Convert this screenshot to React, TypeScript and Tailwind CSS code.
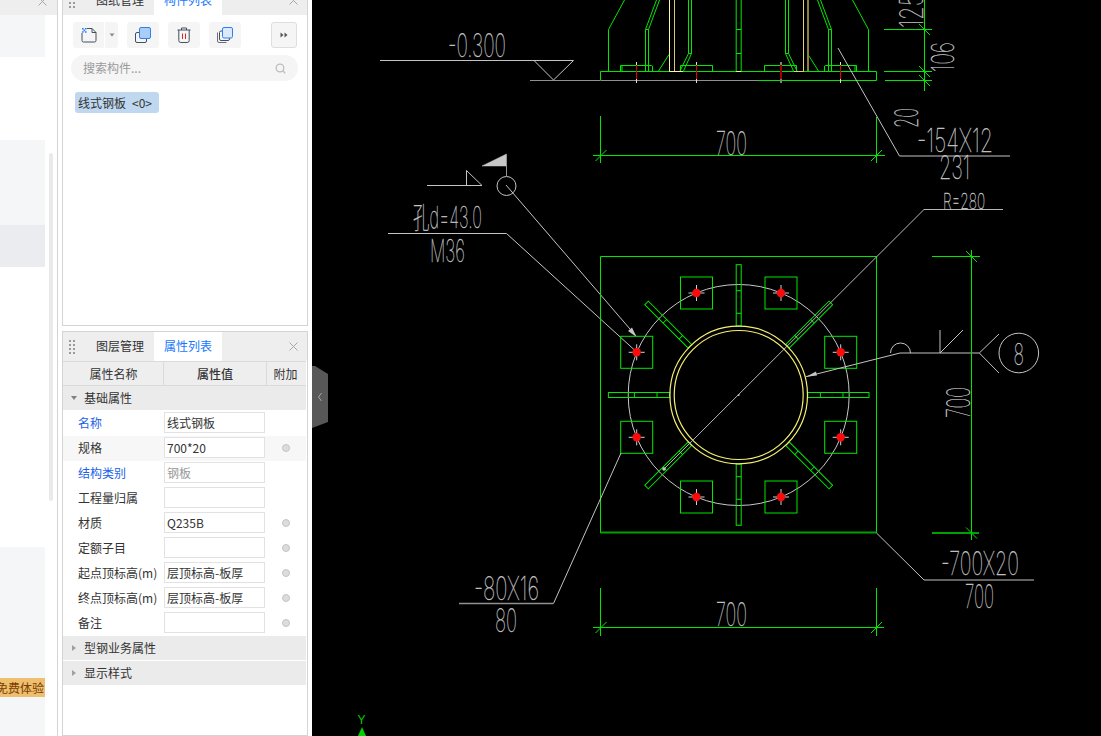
import React from "react";

const FONT = "font-['Noto_Sans_CJK_SC','Liberation_Sans',sans-serif]";
const GREEN = "#00e800";
const GRAY = "#c4c4c4";

function Close({ className = "" }: { className?: string }) {
  return (
    <svg width="9" height="9" viewBox="0 0 9 9" className={className}>
      <path d="M0.5 0.5L8.5 8.5M8.5 0.5L0.5 8.5" stroke="#a8a8a8" strokeWidth="1" fill="none" />
    </svg>
  );
}

function Dots() {
  const pts: [number, number][] = [];
  for (let r = 0; r < 4; r++) for (let c = 0; c < 2; c++) pts.push([c * 4, r * 4]);
  return (
    <svg width="6" height="14" viewBox="0 0 6 14">
      {pts.map(([x, y], i) => (
        <rect key={i} x={x} y={y} width="2" height="2" fill="#9a9a9a" />
      ))}
    </svg>
  );
}

function Header({ a, b }: { a: string; b: string }) {
  return (
    <div className="flex h-[29px] shrink-0 items-stretch bg-[#eeeeef] text-[12px]">
      <div className="flex w-[23px] items-center pl-[6px]">
        <Dots />
      </div>
      <div className="flex w-[68px] items-center justify-center pb-[2px] text-[#333]">{a}</div>
      <div className="flex w-[68px] items-center justify-center bg-white pb-[2px] text-[#1677ff]">{b}</div>
      <div className="ml-auto flex items-center pr-[9px]">
        <Close />
      </div>
    </div>
  );
}

function ToolBtn({ children, className = "" }: { children: React.ReactNode; className?: string }) {
  return <div className={`flex h-[26px] items-center justify-center rounded-[3px] bg-[#f5f5f5] ${className}`}>{children}</div>;
}

function Toolbar() {
  return (
    <div className="flex items-center pl-[10px] pt-[7px]">
      <div className="flex h-[26px] w-[45px] rounded-[3px] bg-[#f5f5f5]">
        <div className="flex w-[32px] items-center justify-center border-r border-white">
          <svg width="16" height="16" viewBox="0 0 16 16">
            <path d="M6 1.5H11L15 5.5V13.5Q15 15 13.5 15H2.5Q1 15 1 13.5V6" fill="none" stroke="#44505e" strokeWidth="1" />
            <path d="M11 1.5V5.5H15" fill="none" stroke="#44505e" strokeWidth="1" />
            <path d="M1 1h1.6v1.6H1zM4 1h1.6v1.6H4zM2.5 2.6h1.6v1.6H2.5zM1 4.2h1.6v1.6H1zM4 4.2h1.6v1.6H4z" fill="#2f7ff0" />
          </svg>
        </div>
        <div className="flex flex-1 items-center justify-center">
          <svg width="6" height="4" viewBox="0 0 6 4"><path d="M0.5 0.5H5.5L3 3.5Z" fill="#888" /></svg>
        </div>
      </div>
      <ToolBtn className="ml-[9px] w-[32px]">
        <svg width="16" height="16" viewBox="0 0 16 16">
          <rect x="0.5" y="5.5" width="11" height="10" rx="1.5" fill="none" stroke="#44505e" />
          <rect x="4.5" y="0.5" width="11" height="11" rx="1.5" fill="#a9cdf5" stroke="#2f7ff0" />
        </svg>
      </ToolBtn>
      <ToolBtn className="ml-[9px] w-[32px]">
        <svg width="14" height="16" viewBox="0 0 14 16">
          <path d="M0.5 3H13.5M4.5 3V1H9.5V3" fill="none" stroke="#44505e" />
          <path d="M1.8 3V13.5Q1.8 15.5 3.8 15.5H10.2Q12.2 15.5 12.2 13.5V3" fill="none" stroke="#44505e" />
          <path d="M5.5 6.5V12M8.5 6.5V12" stroke="#e0281e" strokeWidth="1" />
        </svg>
      </ToolBtn>
      <ToolBtn className="ml-[9px] w-[32px]">
        <svg width="16" height="16" viewBox="0 0 16 16">
          <path d="M0.5 5.5V14Q0.5 15.5 2 15.5H9.5" fill="none" stroke="#66707c" />
          <rect x="2.5" y="4" width="10" height="9.5" rx="1.5" fill="none" stroke="#44505e" />
          <rect x="5.5" y="0.5" width="10" height="10.5" rx="1.5" fill="#dce9fb" stroke="#2f7ff0" />
        </svg>
      </ToolBtn>
      <ToolBtn className="ml-[30px] w-[26px] border border-[#dedede]">
        <svg width="8" height="6" viewBox="0 0 8 6"><path d="M0.5 0.5L3.5 3L0.5 5.5ZM4.5 0.5L7.5 3L4.5 5.5Z" fill="#555" /></svg>
      </ToolBtn>
    </div>
  );
}

function Search() {
  return (
    <div className="ml-[8px] mt-[7px] flex h-[26px] w-[227px] items-center justify-between rounded-full bg-[#f5f5f5] pl-[12px] pr-[12px] text-[12px] text-[#9a9a9a]">
      <span>搜索构件...</span>
      <svg width="11" height="11" viewBox="0 0 11 11">
        <circle cx="5" cy="5" r="3.8" fill="none" stroke="#bdbdbd" strokeWidth="1.3" />
        <path d="M7.8 7.8L10.2 10.2" stroke="#bdbdbd" strokeWidth="1.3" />
      </svg>
    </div>
  );
}

const rows: { label: string; value: string; blue?: boolean; dim?: boolean; dot?: boolean; shade?: boolean }[] = [
  { label: "名称", value: "线式钢板", blue: true },
  { label: "规格", value: "700*20", dot: true, shade: true },
  { label: "结构类别", value: "钢板", blue: true, dim: true },
  { label: "工程量归属", value: "" },
  { label: "材质", value: "Q235B", dot: true },
  { label: "定额子目", value: "", dot: true },
  { label: "起点顶标高(m)", value: "层顶标高-板厚", dot: true },
  { label: "终点顶标高(m)", value: "层顶标高-板厚", dot: true },
  { label: "备注", value: "", dot: true },
];

function Section({ label, open }: { label: string; open?: boolean }) {
  return (
    <div className="flex h-[24px] items-center bg-[#ebebeb] text-[12px] text-[#333]">
      <div className="flex w-[21px] justify-center pl-[1px]">
        {open ? (
          <svg width="6" height="4" viewBox="0 0 6 4"><path d="M0 0H6L3 4Z" fill="#808080" /></svg>
        ) : (
          <svg width="4" height="6" viewBox="0 0 4 6"><path d="M0 0L4 3L0 6Z" fill="#a0a0a0" /></svg>
        )}
      </div>
      <span>{label}</span>
    </div>
  );
}

function Row({ r }: { r: (typeof rows)[number] }) {
  return (
    <div className={`flex h-[25px] items-center pb-[2px] text-[12px] ${r.shade ? "bg-[#f7f7f7]" : "bg-white"}`}>
      <div className={`w-[101px] shrink-0 whitespace-nowrap pl-[15px] ${r.blue ? "text-[#1a62e8]" : "text-[#333]"}`}>{r.label}</div>
      <div className={`flex h-[21px] w-[101px] shrink-0 items-center whitespace-nowrap border border-[#e2e2e2] bg-white pl-[2px] ${r.dim ? "text-[#999]" : "text-[#333]"}`}>
        {r.value}
      </div>
      <div className="flex flex-1 justify-center">
        {r.dot && <div className="h-[8px] w-[8px] rounded-full border border-[#c4c4c4] bg-[#dcdcdc]" />}
      </div>
    </div>
  );
}

function Sidebar() {
  return (
    <div className="relative flex w-[58px] shrink-0 flex-col border-r border-[#d4d4d4] text-[12px]">
      <div className="flex h-[15px] shrink-0 items-start justify-end bg-[#eeeeef] pr-[10px]">
        <div className="-mt-[3px]"><Close /></div>
      </div>
      <div className="h-[42px] w-[45px] shrink-0 bg-[#f5f6f8]" />
      <div className="h-[83px] shrink-0" />
      <div className="h-[85px] w-[45px] shrink-0 bg-[#f5f6f8]" />
      <div className="h-[42px] w-[45px] shrink-0 bg-[#ebecef]" />
      <div className="h-[280px] shrink-0" />
      <div className="flex h-[189px] w-[45px] shrink-0 flex-col bg-[#f5f6f8] pt-[131px]">
        <div className="flex h-[19px] items-center justify-end overflow-hidden whitespace-nowrap bg-[#edbf6e] pr-[1px] text-[#7a3d00]">免费体验</div>
      </div>
      <div className="absolute left-[49px] top-[153px] h-[348px] w-[4px] rounded-full bg-[#eaeaea]" />
    </div>
  );
}

function Panels() {
  return (
    <div className="flex h-[736px] w-[254px] shrink-0 flex-col overflow-hidden px-[4px]">
      <div className="-mt-[15px] h-[341px] shrink-0 border border-[#d4d4d4] bg-white">
        <Header a="图纸管理" b="构件列表" />
        <Toolbar />
        <Search />
        <div className="ml-[12px] mt-[11px] flex h-[21px] w-[84px] items-center whitespace-nowrap rounded-[3px] bg-[#bfd8f0] pl-[3px] text-[12px] text-[#333]">
          线式钢板<span className="ml-[6px]">&lt;0&gt;</span>
        </div>
      </div>
      <div className="mt-[5px] flex-1 border border-[#d4d4d4] bg-white">
        <Header a="图层管理" b="属性列表" />
        <div className="mr-[1px] flex flex-col">
          <div className="flex h-[25px] items-center border-y border-[#dadada] bg-[#eeeeef] text-[12px] text-[#333]">
            <div className="flex h-full w-[101px] items-center justify-center border-r border-[#dadada] pl-[1px]">属性名称</div>
            <div className="flex h-full w-[103px] items-center justify-center border-r border-[#dadada] font-medium">属性值</div>
            <div className="flex flex-1 items-center justify-center pr-[2px]">附加</div>
          </div>
          <Section label="基础属性" open />
          <div className="h-[1px]" />
          {rows.map((r) => (
            <Row key={r.label} r={r} />
          ))}
          <Section label="型钢业务属性" />
          <div className="h-[1px]" />
          <Section label="显示样式" />
        </div>
      </div>
    </div>
  );
}

function T({ x, y, w, s, rot, fill = GRAY, children }: { x: number; y: number; w: number; s: number; rot?: boolean; fill?: string; children: React.ReactNode }) {
  return (
    <text
      x={x}
      y={y}
      fontFamily="Inter,'Noto Sans CJK SC',sans-serif"
      fontWeight="100"
      fontSize={s}
      fill={fill}
      stroke={fill}
      strokeWidth="0.35"
      textLength={w}
      lengthAdjust="spacingAndGlyphs"
      transform={rot ? `rotate(-90 ${x} ${y})` : undefined}
    >
      {children}
    </text>
  );
}

function Rib({ angle }: { angle: number }) {
  return (
    <g transform={`rotate(${angle} 738.7 395)`} fill="none" stroke={GREEN}>
      <rect x="736.2" y="264.7" width="5" height="61.3" />
      <path d="M736.2 290.7H741.2M736.2 313.3H741.2" />
    </g>
  );
}

function Bolt({ x, y }: { x: number; y: number }) {
  return (
    <g>
      <rect x={x - 16} y={y - 16} width="32" height="32" fill="none" stroke={GREEN} />
      <path d={`M${x - 8} ${y}H${x + 8}M${x} ${y - 8}V${y + 8}`} stroke="#d0d0d0" />
      <circle cx={x} cy={y} r="4.2" fill="#ff0a0a" />
    </g>
  );
}

function Half() {
  return (
    <g fill="none" stroke={GREEN}>
      <path d="M608.5 71V29.5L624.5 0" />
      <path d="M645.5 71V29.5H648.5V71M645.5 29.5L656.5 0M648.5 29.5L659.5 0" />
      <path d="M620.5 71V65.5H651.5L652.5 66V71M622 65.5V71" />
      <path d="M658.5 71L669 54.5" />
      <path d="M688.5 0V53.5H691.5V0M688.5 53.5L680 71M691.5 53.5L683.5 71" />
      <path d="M680.5 71V65.5H712.5V71" />
    </g>
  );
}

function Cross({ x, thick }: { x: number; thick?: boolean }) {
  return (
    <g>
      <path d={`M${x} 62V83`} stroke={thick ? "#808080" : "#e0e0e0"} strokeWidth={thick ? 2 : 1} />
      <path d={`M${x} 65V79`} stroke={thick ? "#a00000" : "#e00000"} strokeWidth={thick ? 2 : 1} />
    </g>
  );
}

function Tick({ x, y, back }: { x: number; y: number; back?: boolean }) {
  return back ? (
    <path d={`M${x - 5.5} ${y - 5.5}L${x + 5.5} ${y + 5.5}`} stroke={GREEN} />
  ) : (
    <path d={`M${x - 5.5} ${y + 5.5}L${x + 5.5} ${y - 5.5}`} stroke={GREEN} />
  );
}

function Canvas() {
  return (
    <div className="relative h-[736px] flex-1 overflow-hidden bg-black">
      <svg width="789" height="736" viewBox="312 0 789 736" className="block">
        {/* column elevation */}
        <Half />
        <g transform="translate(1477 0) scale(-1 1)">
          <Half />
        </g>
        <path d="M600.5 80.5V71.5H876.5V80.5H758" fill="none" stroke={GREEN} />
        <path d="M600.5 80.5H758" stroke="#8f8f8f" />
        <path d="M736.2 0V71M741.2 0V71M736.2 29.5H741.2M736.2 53.5H741.2" fill="none" stroke={GREEN} />
        <path d="M669.5 0V71.5H683" fill="none" stroke="#fff3a0" />
        <path d="M674.5 0V71" stroke="#d8c878" />
        <path d="M803.5 0V71.5H794" fill="none" stroke="#e0d080" />
        <path d="M808 0V71" stroke="#8a8040" strokeWidth="2" />
        <path d="M736.2 71.5H741.2" stroke="#fff3a0" />
        <Cross x={636.5} />
        <Cross x={696.5} />
        <Cross x={781} thick />
        <Cross x={840.5} />

        {/* elevation annotations */}
        <path d="M380 60.5H573.5L553.5 80L534 60.5" fill="none" stroke={GRAY} />
        <path d="M530 80.5H600" stroke="#8f8f8f" />
        <T x={448} y={57} w={58} s={32}>-0.300</T>

        <g fill="none" stroke={GREEN}>
          <path d="M600.5 116V163M876.5 117V163M593 155.5H885" />
          <path d="M884 29.5H932M884 71.5H932M885 80.5H932M924.5 0V91" />
        </g>
        <Tick x={601} y={155.5} />
        <Tick x={876.5} y={155.5} />
        <Tick x={924.5} y={29.5} back />
        <Tick x={924.5} y={71.5} back />
        <Tick x={924.5} y={80.5} back />
        <T x={716} y={155} w={31} s={32}>700</T>
        <T x={923} y={28} w={34} s={32} rot>125</T>
        <T x={954} y={72} w={30} s={31} rot>106</T>
        <T x={918} y={128} w={20} s={32} rot>20</T>
        <path d="M838 48L899.5 156H1010" fill="none" stroke={GRAY} />
        <T x={917} y={152} w={76} s={32}>-154X12</T>
        <T x={939} y={179} w={31} s={32}>231</T>

        {/* weld + hole labels */}
        <path d="M427 185.5H482L466.5 170.5V185.5" fill="none" stroke={GRAY} />
        <circle cx="506.5" cy="186" r="9.5" fill="none" stroke={GRAY} />
        <path d="M506.5 176V154L482 166H506.5Z" fill="#c8c8c8" stroke={GRAY} strokeWidth="0.5" />
        <path d="M506 185L636 336" stroke={GRAY} />
        <path d="M636.5 337L628 331L632 327.5Z" fill={GRAY} />
        <path d="M388 233.5H506.5L636.7 352" fill="none" stroke={GRAY} />
        <T x={413} y={228} w={69} s={30}>孔d=43.0</T>
        <T x={430} y={262} w={35} s={31}>M36</T>

        {/* plate */}
        <path d="M600.5 533V256.5H876.5V533" fill="none" stroke={GREEN} />
        <path d="M600.5 532.5H876.5" stroke="#00a000" strokeWidth="2" />
        <circle cx="738.7" cy="395" r="110.5" fill="none" stroke="#c8c8c8" />
        {[0, 45, 90, 135, 180, 225, 270, 315].map((a) => (
          <Rib key={a} angle={a} />
        ))}
        <circle cx="738.7" cy="395" r="68.8" fill="none" stroke="#f5f070" strokeWidth="1.2" />
        <circle cx="738.7" cy="395" r="64.5" fill="none" stroke="#f5f070" strokeWidth="1.2" />
        <Bolt x={696.5} y={293} />
        <Bolt x={781} y={293} />
        <Bolt x={636.7} y={352.3} />
        <Bolt x={840.7} y={352.3} />
        <Bolt x={636.7} y={437.3} />
        <Bolt x={840.7} y={437.3} />
        <Bolt x={696.5} y={497} />
        <Bolt x={781} y={497} />

        {/* R leader */}
        <path d="M1003 209.5H924L664 469" fill="none" stroke="#b8b8b8" />
        <circle cx="664" cy="469" r="1.8" fill={GRAY} />
        <circle cx="738.7" cy="395" r="1" fill={GRAY} />
        <T x={943} y={209} w={42} s={22}>R=280</T>

        {/* weld on the right */}
        <path d="M806 376.7L900 353H979.3L999 334M979.3 353L999 373" fill="none" stroke={GRAY} />
        <path d="M806 376.7L816 371.5L817 375.5Z" fill={GRAY} />
        <path d="M890.5 353A10 10 0 0 1 910.5 353" fill="none" stroke={GRAY} />
        <path d="M940 330V353L963 330" fill="none" stroke={GRAY} />
        <circle cx="1018.8" cy="353" r="19.8" fill="none" stroke={GRAY} />
        <T x={1013.5} y={365} w={10.5} s={30}>8</T>

        {/* right dim */}
        <g fill="none" stroke={GREEN}>
          <path d="M971.5 250V540M932 256.5H980" />
        </g>
        <path d="M932 533H979" stroke="#00a000" strokeWidth="2" />
        <Tick x={971.5} y={256.5} back />
        <Tick x={971.5} y={533} back />
        <T x={970} y={418} w={31} s={32} rot>700</T>
        <path d="M876.5 533L924 580H1034" fill="none" stroke={GRAY} />
        <T x={941} y={575} w={78} s={32}>-700X20</T>
        <T x={965} y={608} w={29} s={32}>700</T>

        {/* lower leader */}
        <path d="M621 453L553.5 603.5" stroke={GRAY} />
        <path d="M459 603.5H553.5" stroke="#909090" strokeWidth="1.4" />
        <T x={474} y={600} w={65} s={32}>-80X16</T>
        <T x={495} y={632} w={22} s={32}>80</T>

        {/* lower dim */}
        <g fill="none" stroke={GREEN}>
          <path d="M600.5 588V636M876.5 588V636M593 627.5H884" />
        </g>
        <Tick x={601} y={627.5} />
        <Tick x={876.5} y={627.5} />
        <T x={716} y={626} w={31} s={32}>700</T>

        {/* UCS */}
        <text x="357.5" y="724" fontFamily="'Liberation Sans',sans-serif" fontSize="12" fill="#00d000">Y</text>
        <path d="M362 727L366.5 737H357.5Z" fill="#00d000" />
      </svg>
      <svg width="16" height="62" viewBox="0 0 16 62" className="absolute left-0 top-[366px]">
        <path d="M0 0H3L16 8V56L0 62Z" fill="#585858" />
        <path d="M9.5 27L6.5 31L9.5 35" fill="none" stroke="#a8a8a8" />
      </svg>
    </div>
  );
}

export default function App() {
  return (
    <div className={`flex h-[736px] w-[1101px] overflow-hidden bg-white ${FONT}`}>
      <Sidebar />
      <Panels />
      <Canvas />
    </div>
  );
}
